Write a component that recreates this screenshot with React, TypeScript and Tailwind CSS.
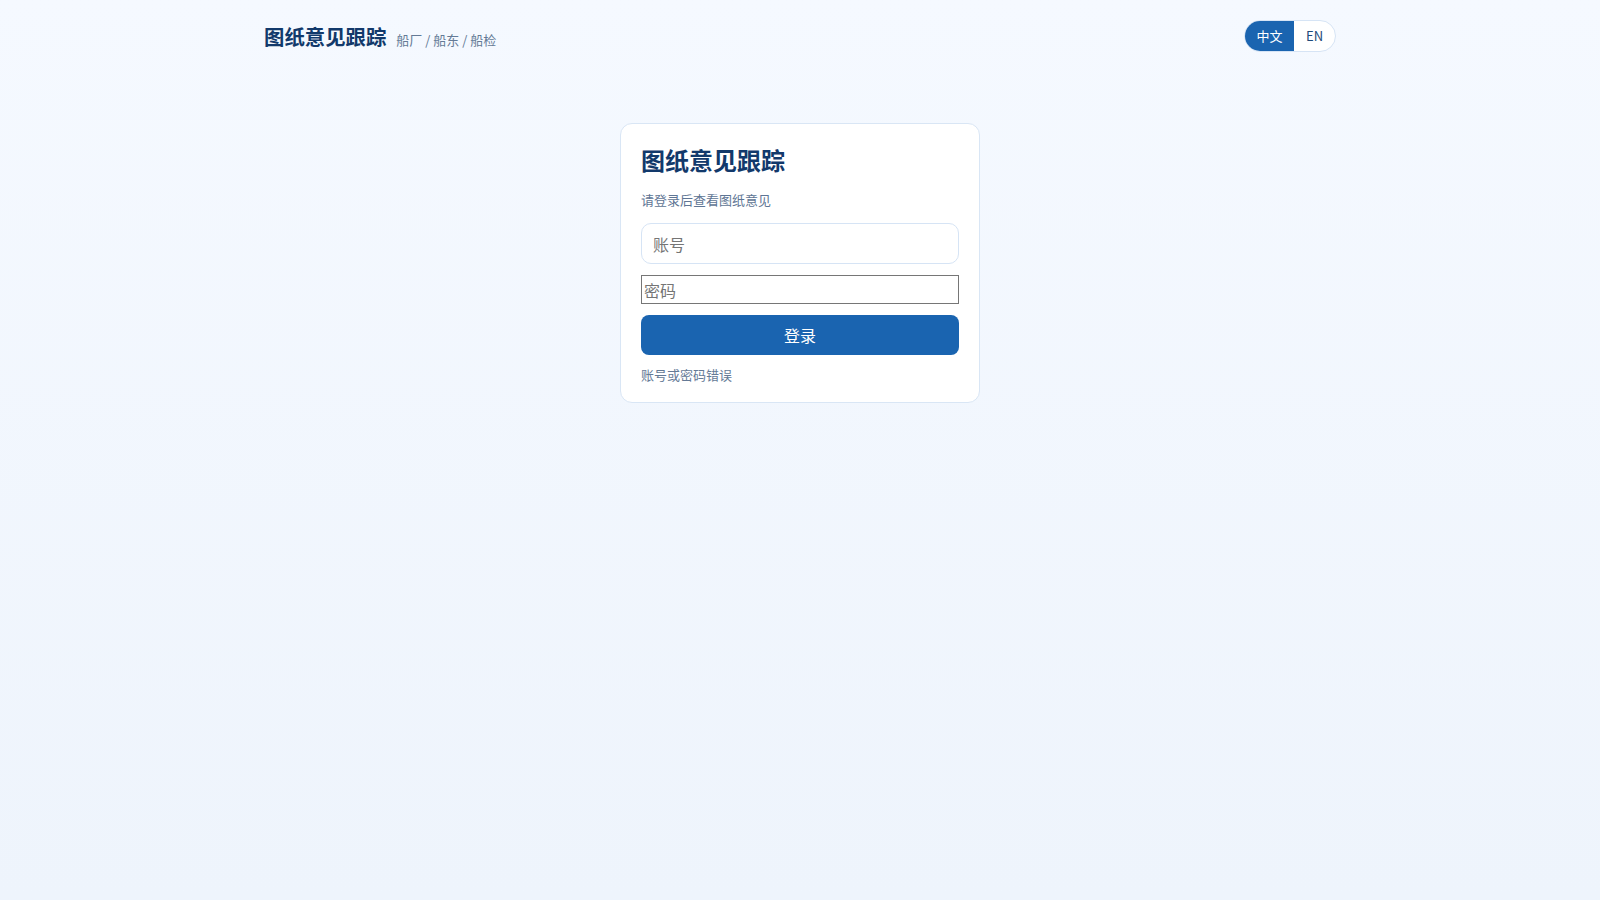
import React from "react";

export default function App() {
  return (
    <div
      className="min-h-screen w-full bg-gradient-to-b from-[#f5f9ff] to-[#eef4fc] text-[#12396b]"
      style={{ fontFamily: '"Noto Sans CJK SC", "Noto Sans", sans-serif' }}
    >
      <header className="mx-auto flex max-w-[1120px] items-center justify-between px-6 pt-5">
        <div className="flex items-baseline gap-[10px]">
          <h1 className="text-[20.4px] font-bold leading-[32px] text-[#12396b]">图纸意见跟踪</h1>
          <span className="text-[13px] text-[#647a96]">船厂 / 船东 / 船检</span>
        </div>
        <div className="flex h-[32px] overflow-hidden rounded-full border border-[#d6e4f5] bg-white text-[13px]">
          <button className="w-[49px] bg-[#1a64b0] text-white">中文</button>
          <button className="w-[41px] text-[#1e4a7a]">EN</button>
        </div>
      </header>

      <main className="flex justify-center pt-[71px]">
        <div className="w-[360px] rounded-[12px] border border-[#d9e6f5] bg-white px-5 pb-[17px] pt-5">
          <h2 className="mb-[14px] text-[24px] font-bold leading-[32px] text-[#12396b]">图纸意见跟踪</h2>
          <p className="mb-[13px] text-[13px] leading-[20px] text-[#5e7594]">请登录后查看图纸意见</p>
          <input
            placeholder="账号"
            className="block h-[41px] w-full rounded-[10px] border border-[#d6e4f5] bg-white px-[11px] text-[16px] text-[#1f2937] placeholder:text-[#757575] outline-none"
          />
          <input
            type="password"
            placeholder="密码"
            className="mt-[11px] block h-[29px] w-full border border-[#767676] bg-white px-[2px] text-[16px] placeholder:text-[#757575] outline-none"
          />
          <button className="mt-[11px] block h-[40px] w-full rounded-[8px] bg-[#1a64b0] text-[16px] text-white">
            登录
          </button>
          <p className="mt-[10px] text-[13px] leading-[20px] text-[#647a96]">账号或密码错误</p>
        </div>
      </main>
    </div>
  );
}
